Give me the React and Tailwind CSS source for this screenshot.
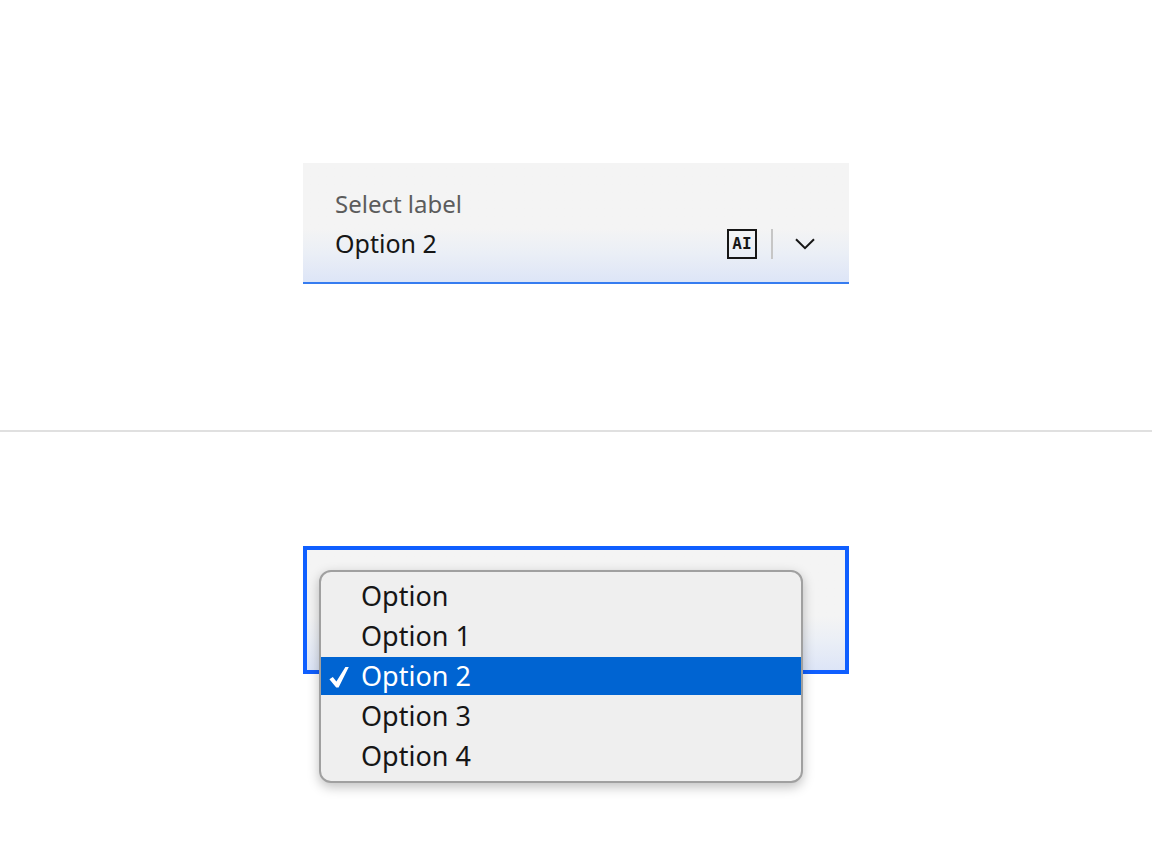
import { useState } from 'react';

const options = ['Option', 'Option 1', 'Option 2', 'Option 3', 'Option 4'];

function ChevronDown() {
  return (
    <svg viewBox="0 0 20 12" className="w-5 h-3" fill="none" stroke="#161616" strokeWidth="2" aria-hidden="true">
      <path d="M1 1.2 10 10.2 19 1.2" />
    </svg>
  );
}

function Checkmark() {
  return (
    <svg viewBox="0 0 22 24" className="w-[22px] h-6" fill="#ffffff" aria-hidden="true">
      <path d="M0.4 15.2 3.8 13.1 7.4 17.6 16.4 3 19.8 3 9.6 23.4 7.2 23.4Z" />
    </svg>
  );
}

function FluidSelect({ value, onChange }) {
  return (
    <div className="w-full max-w-[546px] mx-auto pt-[25px] pl-8 pr-7 pb-3.5 border-b-2 border-[#367cf0] bg-linear-to-b from-[#f4f4f4] from-55% via-[#ebeff6] via-75% to-[#dde5f7]">
      <label htmlFor="fluid-select" className="block text-[24px] leading-8 text-[#5c5c5c]">Select label</label>
      <div className="flex items-center h-12">
        <select
          id="fluid-select"
          value={value}
          onChange={(e) => onChange(e.target.value)}
          className="appearance-none flex-1 min-w-0 h-12 bg-transparent text-[25px] text-[#161616] outline-none"
        >
          {options.map((option) => (
            <option key={option} value={option}>{option}</option>
          ))}
        </select>
        <button type="button" className="flex items-center justify-center size-[30px] border-2 border-[#161616] font-['DejaVu_Sans_Mono',monospace] font-bold text-[16px] leading-none text-[#161616]">
          AI
        </button>
        <div className="w-0.5 h-[30px] ml-3.5 mr-4 bg-[#c6c6c6]"></div>
        <div className="flex justify-center w-8 pointer-events-none">
          <ChevronDown />
        </div>
      </div>
    </div>
  );
}

function OpenSelect({ value, onChange }) {
  return (
    <div className="relative w-full max-w-[546px] h-32 mx-auto border-4 border-[#0f5fff] bg-linear-to-b from-[#f4f4f4] from-55% via-[#ebeff6] via-75% to-[#dde5f7]">
      {/* Native style option menu */}
      <div role="listbox" aria-label="Options" className="absolute top-5 left-3 right-[42px] flex flex-col gap-0.5 pt-[5px] pb-1.5 rounded-xl border-2 border-[#a0a0a0] bg-[#efefef] shadow-[0_4px_12px_rgba(0,0,0,0.25)]">
        {options.map((option) => {
          const selected = option === value;
          return (
            <button
              key={option}
              type="button"
              role="option"
              aria-selected={selected}
              onClick={() => onChange(option)}
              className={`flex items-center w-full h-[38px] pl-2 text-left text-[27px] leading-[38px] ${selected ? 'bg-[#0064d2] text-white' : 'text-[#161616]'}`}
            >
              <span className="w-8 shrink-0">{selected && <Checkmark />}</span>
              {option}
            </button>
          );
        })}
      </div>
    </div>
  );
}

export default function App() {
  const [value, setValue] = useState('Option 2');

  return (
    <main className="min-h-screen bg-white font-['Noto_Sans',sans-serif]">
      <section className="pt-[163px] pb-[146px] border-b-2 border-[#e0e0e0]">
        <FluidSelect value={value} onChange={setValue} />
      </section>
      <section className="pt-[114px] pb-[190px]">
        <OpenSelect value={value} onChange={setValue} />
      </section>
    </main>
  );
}
